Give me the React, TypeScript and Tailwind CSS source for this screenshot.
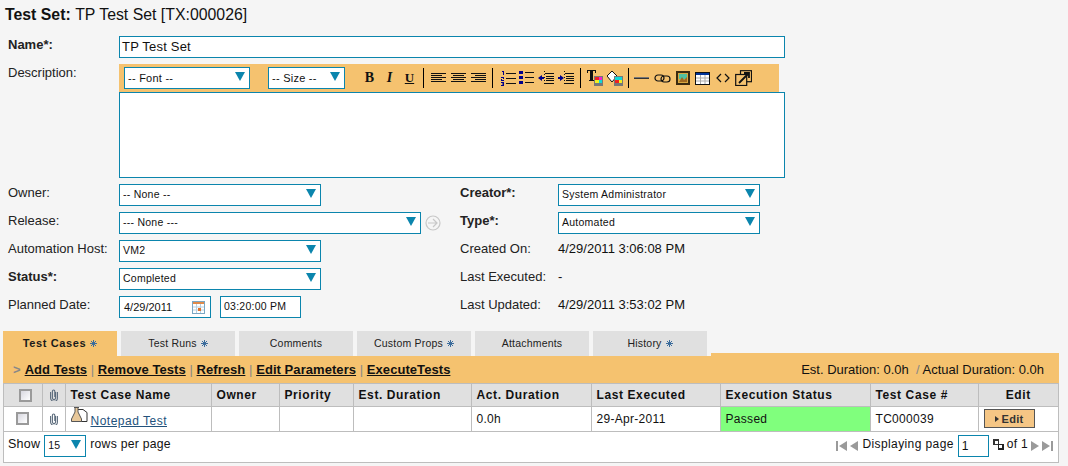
import React from "react";

const FONT = { fontFamily: '"Liberation Sans", Arial, sans-serif' };
const SERIF = { fontFamily: '"Liberation Serif", serif' };

function Tri() {
  return <svg width="10" height="9" viewBox="0 0 10 9" className="mb-[3px] shrink-0"><path d="M0 0h10L5 9z" fill="#0b85ad" /></svg>;
}

function Select({ text, className }: { text: string; className: string }) {
  return (
    <div className={`flex items-center justify-between h-[22px] bg-white border border-[#0b85ad] pl-[3px] pr-[4px] text-[10.5px] tracking-[0.25px] text-[#111] ${className}`}>
      <span>{text}</span>
      <Tri />
    </div>
  );
}

function Lines({ kind }: { kind: "l" | "c" | "r" }) {
  const rows = [0, 1, 2, 3, 4];
  return (
    <svg width="15" height="11" viewBox="0 0 15 11" className="shrink-0">
      {rows.map((r) => {
        const long = r % 2 === 0;
        const w = long ? 15 : 11;
        const x = kind === "l" ? 0 : kind === "r" ? 15 - w : (15 - w) / 2;
        return <rect key={r} x={x} y={r * 2} width={w} height="1" fill="#111" />;
      })}
    </svg>
  );
}

function Sep() {
  return <div className="w-px h-[20px] bg-black shrink-0" />;
}

function Toolbar() {
  return (
    <div className="flex items-center h-[28px] w-[660px] bg-[#f5c26f]">
      <Select text="-- Font --" className="w-[126px] ml-[5px] !text-[11px]" />
      <Select text="-- Size --" className="w-[77px] ml-[18px] !text-[11px]" />
      <span className="ml-[19px] w-[11px] text-center text-[14px] font-bold mb-[1px]" style={SERIF}>B</span>
      <span className="ml-[9px] w-[11px] text-center text-[14px] font-bold italic mb-[1px]" style={SERIF}>I</span>
      <span className="ml-[9px] w-[11px] text-center text-[13px] font-bold underline mb-[1px]" style={SERIF}>U</span>
      <div className="ml-[8px]"><Sep /></div>
      <div className="ml-[7px]"><Lines kind="l" /></div>
      <div className="ml-[5px]"><Lines kind="c" /></div>
      <div className="ml-[5px]"><Lines kind="r" /></div>
      <div className="ml-[6px]"><Sep /></div>
      <svg width="15" height="15" viewBox="0 0 15 15" className="ml-[8px]">
        <path d="M1 0h2v4H2V1H1zM0 6h3v2H1v1h2v1H0V8h2V7H0zM0 11h3v4H0v-1h2v-.5H1v-1h1V12H0z" fill="#00008b" />
        <path d="M5 2.5h10M5 7.5h10M5 12.5h10" stroke="#111" strokeWidth="1" />
      </svg>
      <svg width="15" height="14" viewBox="0 0 15 14" className="ml-[3px]">
        <rect x="0" y="0" width="4" height="3" fill="#00008b" /><rect x="0" y="5" width="4" height="3" fill="#00008b" /><rect x="0" y="10" width="4" height="3" fill="#00008b" />
        <path d="M6 1.5h9M6 6.5h9M6 11.5h9" stroke="#111" strokeWidth="1" />
      </svg>
      <svg width="16" height="15" viewBox="0 0 16 15" className="ml-[4px]">
        <path d="M0 7l4-3v2h2v2H4v2z" fill="#00008b" /><path d="M7 2.5h9M8 5.5h8M8 7.5h8M8 9.5h8M7 12.5h9" stroke="#111" strokeWidth="1" /><path d="M6.5 0v15" stroke="#111" strokeWidth="1" strokeDasharray="1 2" />
      </svg>
      <svg width="16" height="15" viewBox="0 0 16 15" className="ml-[4px]">
        <path d="M6 7L2 4v2H0v2h2v2z" fill="#00008b" /><path d="M7 2.5h9M8 5.5h8M8 7.5h8M8 9.5h8M7 12.5h9" stroke="#111" strokeWidth="1" /><path d="M6.5 0v15" stroke="#111" strokeWidth="1" strokeDasharray="1 2" />
      </svg>
      <div className="ml-[6px]"><Sep /></div>
      <svg width="16" height="16" viewBox="0 0 16 16" className="ml-[6px]">
        <path d="M0 0h9v3H8V1H6v9h1v1H2v-1h1V1H1v2H0z" fill="#111" />
        <rect x="7" y="6" width="9" height="10" fill="#777" />
        <rect x="8" y="7" width="4" height="3" fill="#f02020" /><rect x="12" y="7" width="3" height="3" fill="#f020d0" />
        <rect x="8" y="10" width="4" height="3" fill="#f0f020" /><rect x="12" y="10" width="3" height="3" fill="#10d8d8" />
      </svg>
      <svg width="16" height="16" viewBox="0 0 16 16" className="ml-[4px]">
        <path d="M5 1l5 5-5 6-5-6z" fill="#fff" stroke="#111" strokeWidth="1" />
        <rect x="7" y="6" width="9" height="10" fill="#777" />
        <rect x="8" y="7" width="4" height="3" fill="#10d8d8" /><rect x="12" y="7" width="3" height="3" fill="#10d8d8" />
        <rect x="8" y="10" width="4" height="3" fill="#f02020" /><rect x="12" y="10" width="3" height="3" fill="#f0f020" />
      </svg>
      <div className="ml-[5px]"><Sep /></div>
      <svg width="15" height="3" viewBox="0 0 15 3" className="ml-[5px]"><rect y="0" width="15" height="1" fill="#777" /><rect y="1" width="15" height="1" fill="#333" /></svg>
      <svg width="17" height="9" viewBox="0 0 17 9" className="ml-[5px]" fill="none" stroke="#111" strokeWidth="1.2">
        <rect x="1" y="1" width="9" height="6" rx="3" /><rect x="7" y="2" width="9" height="6" rx="3" />
      </svg>
      <svg width="14" height="14" viewBox="0 0 14 14" className="ml-[5px]">
        <rect x="0" y="0" width="14" height="14" fill="#3a2a10" /><rect x="2" y="2" width="10" height="10" fill="#d8a840" />
        <path d="M3 3h8v5H3z" fill="#50c0a0" /><path d="M3 11l3-5 2 3 3-3v5z" fill="#a06820" />
      </svg>
      <svg width="15" height="13" viewBox="0 0 15 13" className="ml-[5px]">
        <rect x="0.5" y="0.5" width="14" height="12" fill="#fff" stroke="#111" /><rect x="1" y="1" width="13" height="2" fill="#003399" />
        <path d="M1 6h13M1 9h13M5.5 3v9M10 3v9" stroke="#aaa" />
      </svg>
      <svg width="14" height="10" viewBox="0 0 14 10" className="ml-[6px]" fill="none" stroke="#111" strokeWidth="1.2">
        <path d="M5 1L1 5l4 4M9 1l4 4-4 4" />
      </svg>
      <svg width="17" height="16" viewBox="0 0 17 16" className="ml-[5px]" fill="none" stroke="#111" strokeWidth="1.2">
        <rect x="5.5" y="0.7" width="11" height="11" /><rect x="0.7" y="4.5" width="11" height="11" fill="#f5c26f" />
        <path d="M4 13L14 3M9 3h5v5" strokeWidth="1.8" />
      </svg>
    </div>
  );
}

function Star() {
  return (
    <svg width="7" height="7" viewBox="0 0 7 7" className="inline-block ml-[4px]" stroke="#3b6c9c" strokeWidth="1">
      <path d="M3.5 0v7M0 3.5h7M1 1l5 5M6 1L1 6" />
    </svg>
  );
}

function Tab({ label, star, active }: { label: string; star?: boolean; active?: boolean }) {
  return (
    <div className={`flex items-center justify-center w-[114px] h-[25px] ${active ? "bg-[#f5c26f] font-bold text-[#1a1a1a] text-[11px] tracking-[0.6px]" : "bg-[#e0e0e0] text-[#222] text-[10.5px] tracking-[0.2px]"}`}>
      {label}
      {star && <Star />}
    </div>
  );
}

function Checkbox() {
  return <div className="w-[13px] h-[13px] border-2 border-[#9a9a9a] bg-gradient-to-br from-[#d8d8e0] to-white mx-auto" />;
}

function Clip() {
  return (
    <svg width="8" height="12" viewBox="0 0 8 12" fill="none" stroke="#5b6b7c" strokeWidth="1.1" className="mx-auto block">
      <path d="M5.6 3v6a1.6 1.6 0 0 1-3.2 0V2.2a1.2 1.2 0 0 1 2.4 0V8" />
      <path d="M7.4 3v6a3.4 3.4 0 0 1-6.8 0V3" />
    </svg>
  );
}

function FlaskDoc() {
  return (
    <svg width="17" height="17" viewBox="0 0 17 17" className="shrink-0 mb-[6px]">
      <path d="M4 2.5h8l4 3v9H4" fill="#fff" stroke="#333" />
      <path d="M3 0.5h5M4 1v4L0.5 12v2.5h10V12L7 5V1" fill="#e8c89a" stroke="#555" />
    </svg>
  );
}

const Nav = ({ d, c }: { d: string; c?: string }) => (
  <svg width="11" height="10" viewBox="0 0 11 10" className={c}><path d={d} fill="#9a9a9a" /></svg>
);

const TH = "border-r border-[#bdbdbd] text-left font-bold pl-[5px] text-[12px] tracking-[0.6px] whitespace-nowrap";
const TD = "border-r border-t border-[#bdbdbd] pl-[5px] text-[12px] tracking-[0.3px] align-middle";

const COLS = [38, 23, 146, 68, 74, 118, 120, 129, 150, 108, 80];

const Label = ({ children, bold }: { children: React.ReactNode; bold?: boolean }) => (
  <div className={`text-[13px] mb-[5px] text-[#222] ${bold ? "font-bold" : ""}`}>{children}</div>
);
const Row = ({ label, bold, children, w }: { label: string; bold?: boolean; children: React.ReactNode; w: string }) => (
  <div className="flex items-center h-[22px]">
    <div className={w}><Label bold={bold}>{label}</Label></div>
    {children}
  </div>
);

export default function App() {
  return (
    <div className="w-[1068px] h-[466px] overflow-hidden bg-[#f5f5f5] text-[#111]" style={FONT}>
      <div className="h-[30px] pl-[5px] flex items-center text-[15.85px]">
        <b>Test Set:</b>&nbsp;TP Test Set [TX:000026]
      </div>
      <div className="pl-[8px] mt-[6px]">
        <div className="flex items-center h-[22px]">
          <div className="w-[111px]"><Label bold>Name*:</Label></div>
          <div className="w-[666px] h-[22px] bg-white border border-[#0b85ad] pl-[2px] flex items-center text-[13px] tracking-[0.2px]">TP Test Set</div>
        </div>
        <div className="flex mt-[6px]">
          <div className="w-[111px] -mt-[1px]"><Label>Description:</Label></div>
          <div>
            <Toolbar />
            <div className="w-[666px] h-[86px] bg-white border border-[#0b85ad]" />
          </div>
        </div>
        <div className="flex mt-[6px]">
          <div className="w-[452px] flex flex-col gap-[6px]">
            <Row label="Owner:" w="w-[111px]"><Select text="-- None --" className="w-[202px]" /></Row>
            <Row label="Release:" w="w-[111px]">
              <Select text="--- None ---" className="w-[302px]" />
              <svg width="16" height="16" viewBox="0 0 16 16" className="ml-[4px]" fill="none" stroke="#c8c8c8" strokeWidth="1.2">
                <circle cx="8" cy="8" r="7" /><path d="M3 8h9M8 4l4 4-4 4" />
              </svg>
            </Row>
            <Row label="Automation Host:" w="w-[111px]"><Select text="VM2" className="w-[202px]" /></Row>
            <Row label="Status*:" bold w="w-[111px]"><Select text="Completed" className="w-[202px]" /></Row>
            <Row label="Planned Date:" w="w-[111px]">
              <div className="w-[92px] h-[22px] bg-white border border-[#0b85ad] pl-[4px] pr-[5px] flex items-center justify-between text-[11px]">
                4/29/2011
                <svg width="13" height="13" viewBox="0 0 13 13"><rect x="0.5" y="0.5" width="12" height="12" fill="#fff" stroke="#7ba7c4" /><rect x="1" y="1" width="11" height="2" fill="#e08a4a" /><path d="M1 6h11M1 9h11M4.5 3v9M8.5 3v9" stroke="#b7cfe0" /><rect x="6" y="7" width="3" height="3" fill="#e0702a" /></svg>
              </div>
              <div className="w-[81px] h-[22px] ml-[9px] bg-white border border-[#0b85ad] pl-[3px] flex items-center text-[10.5px] tracking-[0.25px]">03:20:00 PM</div>
            </Row>
          </div>
          <div className="flex flex-col gap-[6px]">
            <Row label="Creator*:" bold w="w-[98px]"><Select text="System Administrator" className="w-[202px]" /></Row>
            <Row label="Type*:" bold w="w-[98px]"><Select text="Automated" className="w-[202px]" /></Row>
            <Row label="Created On:" w="w-[98px]"><span className="text-[13px] mb-[5px]">4/29/2011 3:06:08 PM</span></Row>
            <Row label="Last Executed:" w="w-[98px]"><span className="text-[13px] mb-[5px]">-</span></Row>
            <Row label="Last Updated:" w="w-[98px]"><span className="text-[13px] mb-[5px]">4/29/2011 3:53:02 PM</span></Row>
          </div>
        </div>
      </div>

      <div className="mx-[3px] w-[1056px] mt-[13px]">
        <div className="flex gap-[4px]">
          <Tab label="Test Cases" star active />
          <Tab label="Test Runs" star />
          <Tab label="Comments" />
          <Tab label="Custom Props" star />
          <Tab label="Attachments" />
          <Tab label="History" star />
          <div className="flex-1 self-end h-[3px] bg-[#f5c26f]" />
        </div>
        <div className="h-[27px] bg-[#f5c26f] flex items-center justify-between pl-[10px] pr-[15px]">
          <div className="text-[13px] font-bold tracking-[0.06px] whitespace-nowrap">
            <span className="text-[#888] mr-[4px]">&gt;</span>
            <span className="underline">Add Tests</span><span className="font-normal text-[#888]"> | </span>
            <span className="underline">Remove Tests</span><span className="font-normal text-[#888]"> | </span>
            <span className="underline">Refresh</span><span className="font-normal text-[#888]"> | </span>
            <span className="underline">Edit Parameters</span><span className="font-normal text-[#888]"> | </span>
            <span className="underline">ExecuteTests</span>
          </div>
          <div className="text-[13px] whitespace-pre">Est. Duration: 0.0h  <span className="text-[#888]">/</span> Actual Duration: 0.0h</div>
        </div>
        <div className="border border-t-0 border-[#bdbdbd] bg-white">
          <table className="w-full table-fixed border-collapse">
            <colgroup>{COLS.map((w, i) => <col key={i} style={{ width: w }} />)}</colgroup>
            <thead>
              <tr className="h-[23px] bg-[#e0e0e0] border-t border-[#bdbdbd]">
                <th className={TH}><Checkbox /></th>
                <th className={TH + " !pl-0"}><Clip /></th>
                <th className={TH}>Test Case Name</th>
                <th className={TH}>Owner</th>
                <th className={TH}>Priority</th>
                <th className={TH}>Est. Duration</th>
                <th className={TH}>Act. Duration</th>
                <th className={TH}>Last Executed</th>
                <th className={TH}>Execution Status</th>
                <th className={TH}>Test Case #</th>
                <th className="text-center font-bold text-[12px] tracking-[0.6px]">Edit</th>
              </tr>
            </thead>
            <tbody>
              <tr className="h-[24px]">
                <td className={TD + " !pl-0"}><Checkbox /></td>
                <td className={TD + " !pl-0"}><Clip /></td>
                <td className={TD}>
                  <div className="flex items-end">
                    <FlaskDoc />
                    <span className="ml-[3px] underline text-[#23527c] text-[12px] tracking-[0.5px]">Notepad Test</span>
                  </div>
                </td>
                <td className={TD}></td>
                <td className={TD}></td>
                <td className={TD}></td>
                <td className={TD}>0.0h</td>
                <td className={TD}>29-Apr-2011</td>
                <td className={TD + " bg-[#80ff7d]"}>Passed</td>
                <td className={TD}>TC000039</td>
                <td className="border-t border-[#bdbdbd] pl-[5px]">
                  <div className="w-[51px] h-[19px] bg-[#f5c685] border border-[#555] flex items-center justify-center gap-[3px] text-[11px] font-bold text-[#333] tracking-[0.3px]">
                    <svg width="4" height="6" viewBox="0 0 4 6"><path d="M0 0l4 3-4 3z" fill="#333" /></svg>
                    Edit
                  </div>
                </td>
              </tr>
            </tbody>
          </table>
          <div className="h-[31px] border-t border-[#bdbdbd] flex items-start justify-between pl-[4px] pr-[3px] pt-[3px] text-[12px]">
            <div className="flex items-center tracking-[0.25px]">
              <span className="mb-[3px] text-[12.5px]">Show</span>
              <div className="ml-[4px] w-[42px] h-[22px] bg-white border border-[#0b85ad] flex items-center justify-between pl-[3px] pr-[4px] text-[10.5px]">
                15
                <Tri />
              </div>
              <span className="ml-[4px] mb-[3px] text-[12.2px]">rows per page</span>
            </div>
            <div className="flex items-center mr-[2px]">
              <Nav d="M0 0h2v10H0zM11 0v10L3 5z" />
              <Nav d="M10 0v10L2 5z" c="ml-[1px]" />
              <span className="ml-[3px] mb-[3px] tracking-[0.4px]">Displaying page</span>
              <div className="ml-[4px] w-[31px] h-[22px] bg-white border border-[#0b85ad] flex items-center pl-[3px]">1</div>
              <svg width="11" height="11" viewBox="0 0 11 11" className="ml-[4px] mb-[3px]"><rect x="0" y="0" width="6" height="6" fill="#333" /><rect x="5" y="5" width="6" height="6" fill="#222" /><rect x="2" y="2" width="3" height="3" fill="#fff" /><rect x="6" y="6" width="3" height="3" fill="#fff" /></svg>
              <span className="ml-[3px] mb-[3px] tracking-[0.3px]">of 1</span>
              <Nav d="M1 0v10l8-5z" c="ml-[2px]" />
              <Nav d="M0 0v10l8-5zM9 0h2v10H9z" c="ml-[1px]" />
            </div>
          </div>
        </div>
      </div>
    </div>
  );
}
